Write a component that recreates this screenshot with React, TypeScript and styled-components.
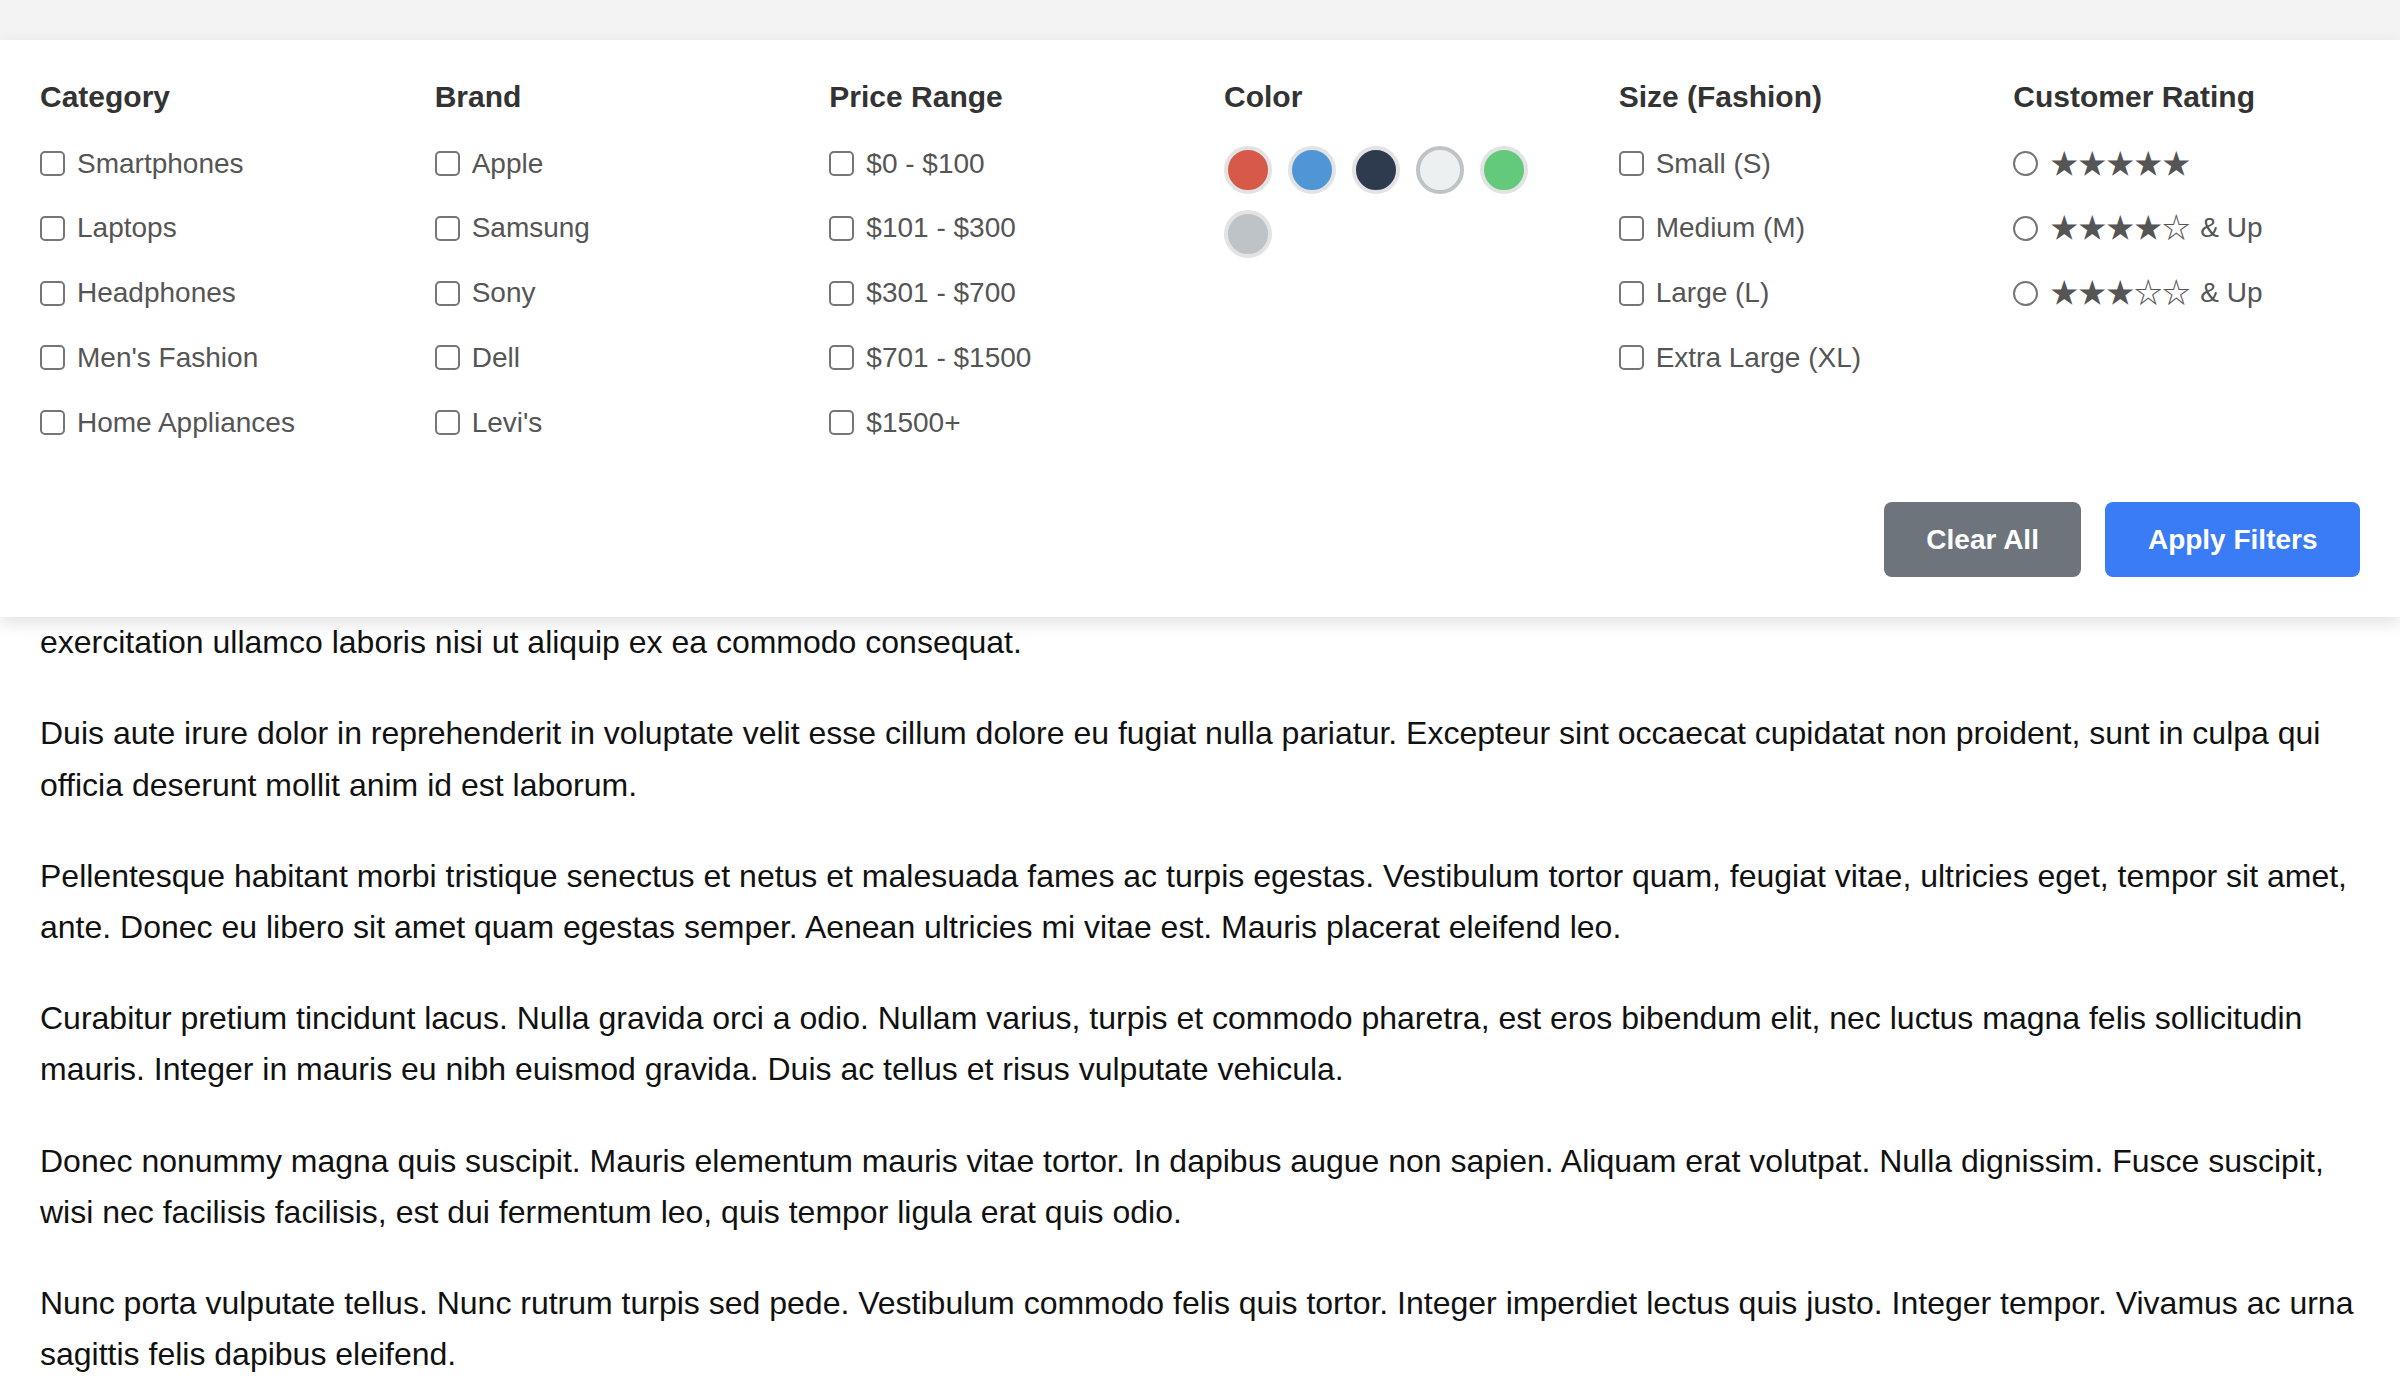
import React from "react";
import styled, { createGlobalStyle } from "styled-components";

const GlobalStyle = createGlobalStyle`
  html, body {
    margin: 0;
    padding: 0;
    background: #ffffff;
    font-family: "Liberation Sans", Arial, Helvetica, sans-serif;
  }
  * { box-sizing: border-box; }
`;

const Page = styled.div`
  position: relative;
  min-height: 1388px;
  background: #ffffff;
`;

const TopBar = styled.header`
  height: 40px;
  background: #f3f3f3;
`;

const Main = styled.main`
  padding: 526px 40px 40px;
  color: #111111;
  font-size: 32px;
  line-height: 51.2px;
`;

const Paragraph = styled.p`
  margin: 0 0 40px;
`;

const Panel = styled.section`
  position: absolute;
  top: 40px;
  left: 0;
  right: 0;
  z-index: 10;
  background: #ffffff;
  padding: 40px;
  box-shadow: 0 6px 16px rgba(0, 0, 0, 0.12);
`;

const FilterGrid = styled.div`
  display: grid;
  grid-template-columns: repeat(6, 1fr);
  column-gap: 48px;
`;

const Column = styled.div`
  display: flex;
  flex-direction: column;
`;

const Heading = styled.h4`
  margin: 0 0 33px;
  font-size: 30px;
  line-height: 34.5px;
  font-weight: 700;
  color: #333333;
`;

const OptionRow = styled.label`
  display: flex;
  align-items: center;
  gap: 12px;
  height: 32px;
  margin-bottom: 32.75px;
  font-size: 28px;
  color: #555555;
  white-space: nowrap;
  cursor: pointer;
`;

const CheckBox = styled.input.attrs({ type: "checkbox" })`
  appearance: none;
  -webkit-appearance: none;
  margin: 0;
  flex: 0 0 auto;
  width: 25px;
  height: 25px;
  border: 2px solid #767676;
  border-radius: 5px;
  background: #ffffff;
`;

const Radio = styled.input.attrs({ type: "radio" })`
  appearance: none;
  -webkit-appearance: none;
  margin: 0;
  flex: 0 0 auto;
  width: 25px;
  height: 25px;
  border: 2px solid #767676;
  border-radius: 50%;
  background: #ffffff;
`;

const Stars = styled.span`
  font-family: "Noto Sans CJK JP", "DejaVu Sans", sans-serif;
  font-size: 28px;
  line-height: 1;
  color: #555555;
  transform: translateY(-2px);
`;

const UpText = styled.span`
  margin-left: -2px;
`;

const SwatchWrap = styled.div`
  display: flex;
  flex-wrap: wrap;
  gap: 16px;
  margin-top: -2px;
`;

const Swatch = styled.button<{ $color: string; $ring?: string }>`
  width: 48px;
  height: 48px;
  padding: 0;
  border-radius: 50%;
  border: 4px solid ${(p) => p.$ring || "#e3e3e3"};
  background: ${(p) => p.$color};
  cursor: pointer;
`;

const Footer = styled.div`
  display: flex;
  justify-content: flex-end;
  gap: 24px;
  margin-top: 31px;
`;

const Button = styled.button<{ $variant: "secondary" | "primary" }>`
  height: 75px;
  padding: 0 42.5px;
  border: none;
  border-radius: 8px;
  font-family: "Liberation Sans", Arial, Helvetica, sans-serif;
  font-size: 28px;
  font-weight: 700;
  color: #ffffff;
  background: ${(p) => (p.$variant === "primary" ? "#3a7cf5" : "#6d747c")};
  cursor: pointer;
`;

const categories = ["Smartphones", "Laptops", "Headphones", "Men's Fashion", "Home Appliances"];
const brands = ["Apple", "Samsung", "Sony", "Dell", "Levi's"];
const prices = ["$0 - $100", "$101 - $300", "$301 - $700", "$701 - $1500", "$1500+"];
const sizes = ["Small (S)", "Medium (M)", "Large (L)", "Extra Large (XL)"];
const colors: { color: string; ring?: string; name: string }[] = [
  { name: "Red", color: "#d6594a" },
  { name: "Blue", color: "#5096d7" },
  { name: "Navy", color: "#2e3b4e" },
  { name: "White", color: "#ecf0f1", ring: "#bec3c7" },
  { name: "Green", color: "#63c97b" },
  { name: "Gray", color: "#bec3c7" },
];
const ratings = [
  { stars: "★★★★★", up: false },
  { stars: "★★★★☆", up: true },
  { stars: "★★★☆☆", up: true },
];

const paragraphs = [
  "Lorem ipsum dolor sit amet, consectetur adipiscing elit, sed do eiusmod tempor incididunt ut labore et dolore magna aliqua. Ut enim ad minim veniam, quis nostrud exercitation ullamco laboris nisi ut aliquip ex ea commodo consequat.",
  "Duis aute irure dolor in reprehenderit in voluptate velit esse cillum dolore eu fugiat nulla pariatur. Excepteur sint occaecat cupidatat non proident, sunt in culpa qui officia deserunt mollit anim id est laborum.",
  "Pellentesque habitant morbi tristique senectus et netus et malesuada fames ac turpis egestas. Vestibulum tortor quam, feugiat vitae, ultricies eget, tempor sit amet, ante. Donec eu libero sit amet quam egestas semper. Aenean ultricies mi vitae est. Mauris placerat eleifend leo.",
  "Curabitur pretium tincidunt lacus. Nulla gravida orci a odio. Nullam varius, turpis et commodo pharetra, est eros bibendum elit, nec luctus magna felis sollicitudin mauris. Integer in mauris eu nibh euismod gravida. Duis ac tellus et risus vulputate vehicula.",
  "Donec nonummy magna quis suscipit. Mauris elementum mauris vitae tortor. In dapibus augue non sapien. Aliquam erat volutpat. Nulla dignissim. Fusce suscipit, wisi nec facilisis facilisis, est dui fermentum leo, quis tempor ligula erat quis odio.",
  "Nunc porta vulputate tellus. Nunc rutrum turpis sed pede. Vestibulum commodo felis quis tortor. Integer imperdiet lectus quis justo. Integer tempor. Vivamus ac urna sagittis felis dapibus eleifend.",
];

function CheckList({ items }: { items: string[] }) {
  return (
    <>
      {items.map((it) => (
        <OptionRow key={it}>
          <CheckBox />
          <span>{it}</span>
        </OptionRow>
      ))}
    </>
  );
}

export default function App() {
  return (
    <Page>
      <GlobalStyle />
      <TopBar />
      <Panel>
        <FilterGrid>
          <Column>
            <Heading>Category</Heading>
            <CheckList items={categories} />
          </Column>
          <Column>
            <Heading>Brand</Heading>
            <CheckList items={brands} />
          </Column>
          <Column>
            <Heading>Price Range</Heading>
            <CheckList items={prices} />
          </Column>
          <Column>
            <Heading>Color</Heading>
            <SwatchWrap>
              {colors.map((c) => (
                <Swatch key={c.name} title={c.name} $color={c.color} $ring={c.ring} />
              ))}
            </SwatchWrap>
          </Column>
          <Column>
            <Heading>Size (Fashion)</Heading>
            <CheckList items={sizes} />
          </Column>
          <Column>
            <Heading>Customer Rating</Heading>
            {ratings.map((r, i) => (
              <OptionRow key={i}>
                <Radio name="rating" />
                <Stars>{r.stars}</Stars>
                {r.up && <UpText>&amp; Up</UpText>}
              </OptionRow>
            ))}
          </Column>
        </FilterGrid>
        <Footer>
          <Button $variant="secondary">Clear All</Button>
          <Button $variant="primary">Apply Filters</Button>
        </Footer>
      </Panel>
      <Main>
        {paragraphs.map((p, i) => (
          <Paragraph key={i}>{p}</Paragraph>
        ))}
      </Main>
    </Page>
  );
}
